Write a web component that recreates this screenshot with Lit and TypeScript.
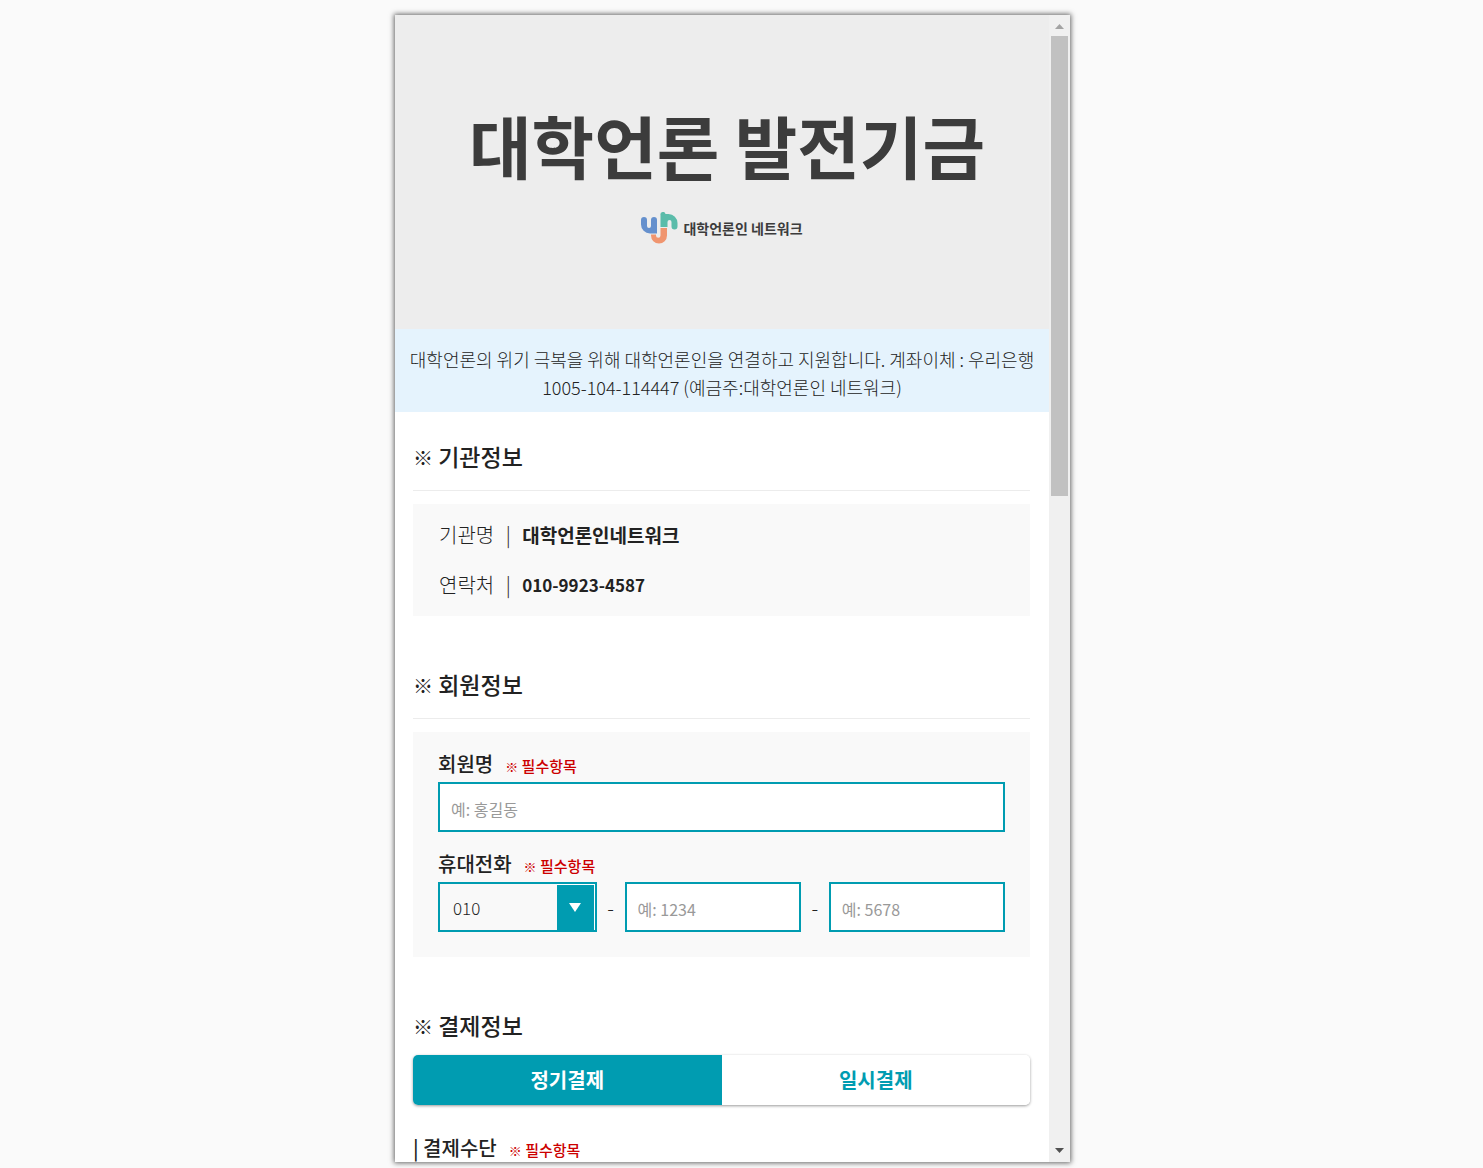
import { LitElement, html, css } from "lit";
import { customElement, state } from "lit/decorators.js";

@customElement("app-root")
export class AppRoot extends LitElement {
  @state() private plan: "regular" | "once" = "regular";

  static styles = css`
    :host {
      display: flex;
      justify-content: center;
      box-sizing: border-box;
      height: 100vh;
      padding: 15px 18px 6px 0;
      background: #fafafa;
      color: #222;
      font-family: "Noto Sans CJK KR", "Noto Sans", sans-serif;
      font-size: 20px;
      font-weight: 300;
    }
    * {
      box-sizing: border-box;
    }
    h1, h2, p, dl, dd, dt {
      margin: 0;
    }
    .window {
      display: flex;
      width: 100%;
      max-width: 675px;
      background: #fff;
      box-shadow: 0 0 5px 1px #666;
    }
    .page {
      flex: 1;
      min-width: 0;
      overflow-y: auto;
      scrollbar-width: none;
    }
    .scrollbar {
      display: flex;
      flex-direction: column;
      flex: none;
      width: 21px;
      background: #f0f0f0;
    }
    .arrow {
      display: block;
      flex: none;
      width: 21px;
      height: 21px;
    }
    .thumb {
      flex: 5;
      margin: 0 2px;
      background: #c1c1c1;
    }
    .rest {
      flex: 7;
    }
    .hero {
      display: flex;
      flex-direction: column;
      align-items: center;
      padding: 84px 0;
      background: #ededed;
      color: #3c3c3c;
    }
    .title {
      padding-left: 10px;
      font-size: 68px;
      line-height: 92px;
      font-weight: 700;
      white-space: nowrap;
    }
    .brand {
      display: flex;
      align-items: center;
      gap: 5px;
      height: 32px;
      margin-top: 21px;
      font-size: 14px;
      font-weight: 700;
      margin-bottom: 1px;
    }
    .notice {
      padding: 16px 12px 11px;
      background: #e5f3fd;
      font-size: 18px;
      line-height: 28px;
      text-align: center;
    }
    .sections {
      display: flex;
      flex-direction: column;
      gap: 52px;
      padding: 28px 19px 28px 18px;
    }
    .heading {
      font-size: 23px;
      line-height: 32px;
      padding-bottom: 2px;
      font-weight: 500;
    }
    .mark {
      font-size: 20px;
      line-height: 1;
    }
    .ruled {
      margin-bottom: 13px;
      padding-bottom: 18px;
      border-bottom: 1px solid #ececec;
    }
    .card {
      background: #f9f9f9;
    }
    .facts {
      padding: 6px 26px;
    }
    .fact {
      display: flex;
      line-height: 50px;
    }
    .bar {
      width: 28px;
      text-align: center;
    }
    .value {
      font-size: 19px;
      font-weight: 700;
    }
    .number {
      font-size: 17px;
    }
    .form {
      padding: 17px 25px 25px;
    }
    .field + .field {
      margin-top: 17px;
    }
    .label {
      display: flex;
      align-items: baseline;
      gap: 12px;
      padding-bottom: 3px;
      line-height: 30px;
      font-weight: 500;
    }
    .required {
      color: #c00;
      font-size: 15px;
      line-height: 1;
    }
    .required .mark {
      font-size: 13px;
    }
    .input, .select {
      display: block;
      width: 100%;
      min-width: 0;
      height: 50px;
      margin: 0;
      padding: 3px 11px 0;
      border: 2px solid #009cb1;
      border-radius: 0;
      background: #fff;
      color: #222;
      font: inherit;
      font-size: 16px;
    }
    .input::placeholder {
      color: #999;
      font-weight: 400;
      opacity: 1;
    }
    .phone {
      display: grid;
      grid-template-columns: 9fr 28px 10fr 28px 10fr;
      align-items: center;
      text-align: center;
    }
    .picker {
      display: grid;
    }
    .picker > * {
      grid-area: 1 / 1;
    }
    .select {
      appearance: none;
      padding: 0 13px;
      background: #f9f9f9;
      font-size: 17px;
    }
    .drop {
      display: flex;
      align-items: center;
      justify-content: center;
      justify-self: end;
      width: 38px;
      height: 46px;
      margin: 2px;
      border: solid #fff;
      border-width: 1px 1px 0 0;
      background: #009cb1;
      pointer-events: none;
    }
    .tabs {
      display: grid;
      grid-template-columns: 1fr 1fr;
      margin-top: 12px;
      border-radius: 5px;
      box-shadow: 0 1px 3px #0006;
      overflow: hidden;
    }
    .tab {
      height: 50px;
      padding: 0 0 2px;
      border: 0;
      background: #fff;
      color: #009cb1;
      font: inherit;
      font-weight: 700;
    }
    .active {
      background: #009cb1;
      color: #fff;
    }
    .method {
      margin-top: 28px;
    }
  `;

  private required() {
    return html`<span class="required"><span class="mark">※</span> 필수항목</span>`;
  }

  private tab(id: "regular" | "once", text: string) {
    return html`<button
      type="button"
      class="tab ${this.plan === id ? "active" : ""}"
      aria-pressed=${this.plan === id}
      @click=${() => (this.plan = id)}
    >${text}</button>`;
  }

  render() {
    return html`
      <div class="window">
        <main class="page">
          <header class="hero">
            <h1 class="title">대학언론 발전기금</h1>
            <div class="brand">
              <svg width="37" height="32" viewBox="0 0 37 32" aria-hidden="true">
                <path d="M3 5a3 3 0 0 1 3 3v6a2 2 0 0 0 4 0V8a3 3 0 0 1 6 0v13.500H9A9 9 0 0 1 0 12.500V8a3 3 0 0 1 3-3z" fill="#6590cd" />
                <path d="M19.500 15V3a2.500 2.500 0 0 1 5-1h3a9 9 0 0 1 9 9v3.500a3 3 0 0 1-6 0V10a2 2 0 0 0-4 0v5z" fill="#5bbcaa" />
                <path d="M19.500 16h6.500v7.500a8 8 0 0 1-16 0v-1h5v1a2.200 2.200 0 0 0 4.500 0z" fill="#f0956f" />
              </svg>
              <span>대학언론인 네트워크</span>
            </div>
          </header>
          <p class="notice">
            대학언론의 위기 극복을 위해 대학언론인을 연결하고 지원합니다. 계좌이체 : 우리은행 1005-104-114447 (예금주:대학언론인 네트워크)
          </p>
          <div class="sections">
            <section>
              <h2 class="heading ruled"><span class="mark">※</span> 기관정보</h2>
              <dl class="card facts">
                <div class="fact">
                  <dt>기관명</dt>
                  <span class="bar" aria-hidden="true">|</span>
                  <dd class="value">대학언론인네트워크</dd>
                </div>
                <div class="fact">
                  <dt>연락처</dt>
                  <span class="bar" aria-hidden="true">|</span>
                  <dd class="value number">010-9923-4587</dd>
                </div>
              </dl>
            </section>
            <section>
              <h2 class="heading ruled"><span class="mark">※</span> 회원정보</h2>
              <form class="card form">
                <div class="field">
                  <label class="label" for="name">회원명 ${this.required()}</label>
                  <input class="input" id="name" type="text" placeholder="예: 홍길동" />
                </div>
                <div class="field">
                  <label class="label" for="prefix">휴대전화 ${this.required()}</label>
                  <div class="phone">
                    <div class="picker">
                      <select class="select" id="prefix">
                        <option>010</option>
                        <option>011</option>
                        <option>016</option>
                        <option>017</option>
                        <option>018</option>
                        <option>019</option>
                      </select>
                      <span class="drop">
                        <svg width="12" height="9" viewBox="0 0 12 9" aria-hidden="true"><path d="M0 0h12L6 9z" fill="#fff" /></svg>
                      </span>
                    </div>
                    <span>-</span>
                    <input class="input" type="tel" aria-label="휴대전화 가운데 자리" placeholder="예: 1234" />
                    <span>-</span>
                    <input class="input" type="tel" aria-label="휴대전화 끝자리" placeholder="예: 5678" />
                  </div>
                </div>
              </form>
            </section>
            <section>
              <h2 class="heading"><span class="mark">※</span> 결제정보</h2>
              <div class="tabs">
                ${this.tab("regular", "정기결제")} ${this.tab("once", "일시결제")}
              </div>
              <div class="label method">| 결제수단 ${this.required()}</div>
            </section>
          </div>
        </main>
        <div class="scrollbar" aria-hidden="true">
          <svg class="arrow" viewBox="0 0 21 21"><path d="M6 14l4.500-5 4.500 5z" fill="#a3a3a3" /></svg>
          <div class="thumb"></div>
          <div class="rest"></div>
          <svg class="arrow" viewBox="0 0 21 21"><path d="M6 7h9l-4.500 5z" fill="#505050" /></svg>
        </div>
      </div>
    `;
  }
}
